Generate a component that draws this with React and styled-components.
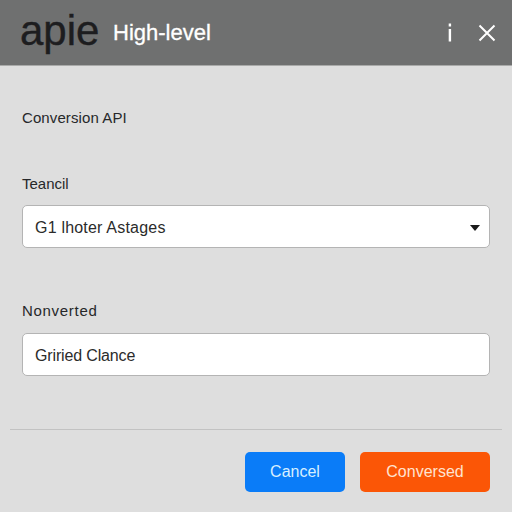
import React from "react";
import styled, { createGlobalStyle } from "styled-components";

const Global = createGlobalStyle`
  html, body {
    margin: 0;
    padding: 0;
    width: 512px;
    height: 512px;
    overflow: hidden;
    background: #dedede;
    font-family: "Liberation Sans", Arial, sans-serif;
  }
`;

const Page = styled.div`
  width: 512px;
  height: 512px;
  display: flex;
  flex-direction: column;
  background: #dedede;
`;

const Header = styled.header`
  height: 66px;
  flex: none;
  box-sizing: border-box;
  display: flex;
  align-items: center;
  padding: 0 0 0 20px;
  background: #6f7070;
  border-bottom: 1px solid #a9aaa9;
`;

const Logo = styled.div`
  font-size: 42px;
  line-height: 1;
  color: #1d1d1f;
  width: 93px;
  margin-bottom: 3px;
  -webkit-text-stroke: 0.4px #1d1d1f;
`;

const Title = styled.div`
  font-size: 22px;
  font-weight: 400;
  color: #fff;
  -webkit-text-stroke: 0.3px #fff;
  flex: 1;
`;

const IconButton = styled.div`
  display: flex;
  align-items: center;
  justify-content: center;
  width: ${(p) => p.$w}px;
  height: 24px;
  color: #fff;
`;

const Body = styled.main`
  flex: 1;
  display: flex;
  flex-direction: column;
  padding: 43px 22px 0;
`;

const Caption = styled.div`
  font-size: 15px;
  line-height: 18px;
  color: #26282a;
  letter-spacing: ${(p) => p.$track || 0}px;
  margin-bottom: ${(p) => p.$gap}px;
`;

const Field = styled.div`
  height: 43px;
  box-sizing: border-box;
  display: flex;
  align-items: center;
  justify-content: space-between;
  padding: ${(p) => p.$nudge || 0}px 12px 0;
  background: #fff;
  border: 1px solid #b4b4b4;
  border-radius: 5px;
  font-size: 16px;
  color: #2b2b2b;
  margin-bottom: ${(p) => p.$gap}px;
`;

const FieldText = styled.span`
  letter-spacing: ${(p) => p.$track || 0}px;
`;

const Caret = styled.span`
  width: 0;
  height: 0;
  border-left: 5px solid transparent;
  border-right: 5px solid transparent;
  border-top: 6px solid #1a1a1a;
  margin-right: -3px;
`;

const Divider = styled.hr`
  height: 1px;
  flex: none;
  border: 0;
  margin: 0 10px;
  background: #c2c2c2;
`;

const Footer = styled.footer`
  height: 82px;
  flex: none;
  box-sizing: border-box;
  display: flex;
  justify-content: flex-end;
  align-items: flex-start;
  gap: 15px;
  padding: 22px 22px 0;
`;

const Button = styled.button`
  width: ${(p) => p.$w}px;
  height: 40px;
  border: 0;
  border-radius: 5px;
  padding: 0;
  font: 400 16px "Liberation Sans", Arial, sans-serif;
  background: ${(p) => p.$bg};
  color: ${(p) => p.$fg};
`;

export default function App() {
  return (
    <>
      <Global />
      <Page>
        <Header>
          <Logo>apie</Logo>
          <Title>High-level</Title>
          <IconButton $w={24}>
            <svg width="6" height="19" viewBox="0 0 6 19">
              <rect x="1.7" y="0.5" width="2.4" height="3" fill="#fff" />
              <rect x="1.7" y="6" width="2.4" height="12.5" fill="#fff" />
            </svg>
          </IconButton>
          <IconButton $w={50}>
            <svg width="18" height="18" viewBox="0 0 18 18">
              <path d="M1.5 1.5 L16.5 16.5 M16.5 1.5 L1.5 16.5" stroke="#fff" strokeWidth="2" />
            </svg>
          </IconButton>
        </Header>
        <Body>
          <Caption $gap={48} $track={0.1}>Conversion API</Caption>
          <Caption $gap={12}>Teancil</Caption>
          <Field $gap={54} $nudge={2}>
            <FieldText $track={0.2}>G1 lhoter Astages</FieldText>
            <Caret />
          </Field>
          <Caption $gap={13} $track={0.7}>Nonverted</Caption>
          <Field $gap={0} $nudge={2}>
            <FieldText $track={-0.15}>Griried Clance</FieldText>
          </Field>
        </Body>
        <Divider />
        <Footer>
          <Button $w={100} $bg="#0a7cf8" $fg="#d8efff">Cancel</Button>
          <Button $w={130} $bg="#fb5606" $fg="#ffe3d0">Conversed</Button>
        </Footer>
      </Page>
    </>
  );
}
